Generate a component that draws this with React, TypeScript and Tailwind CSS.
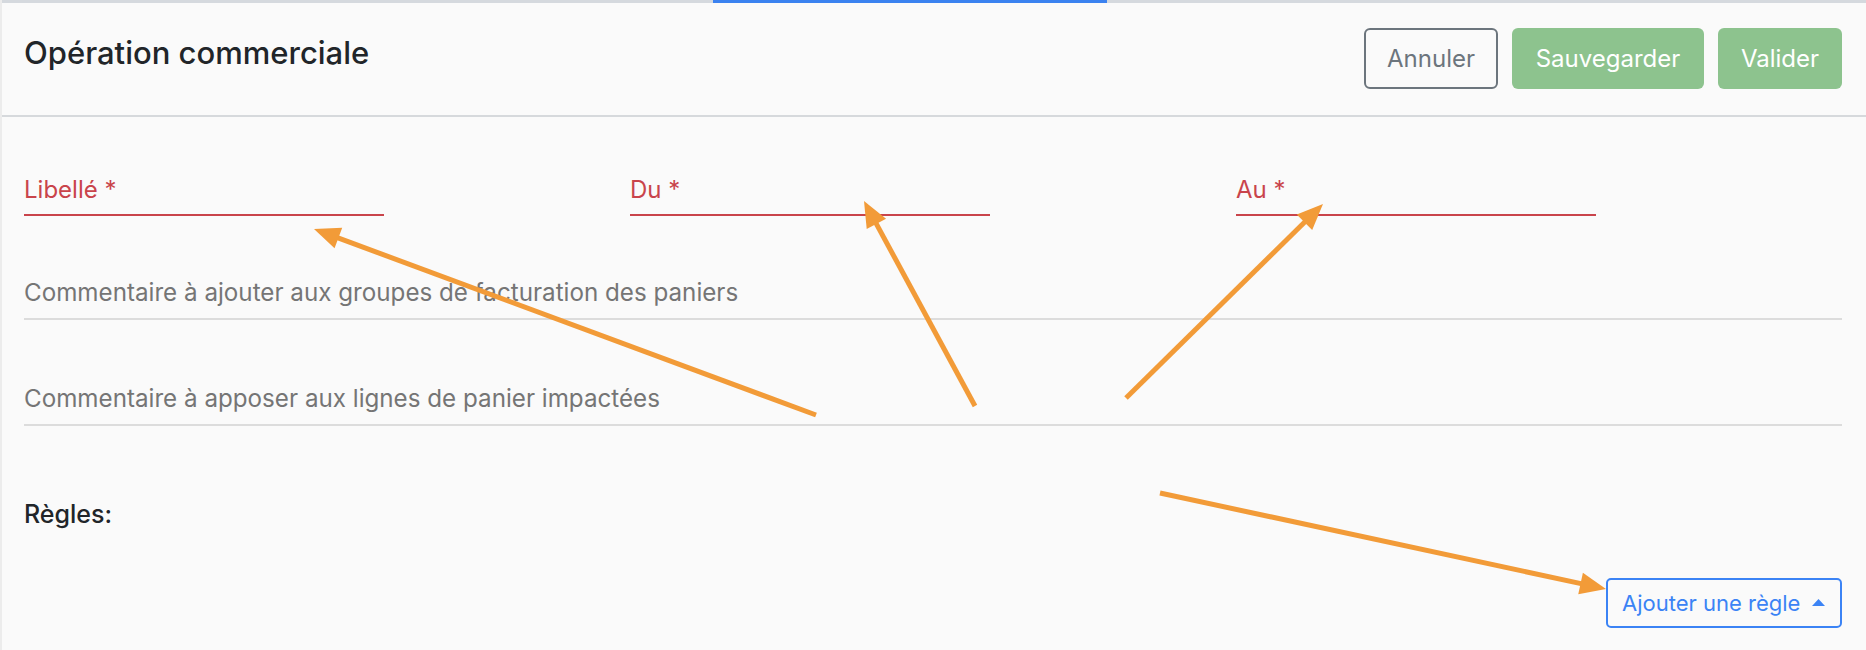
import React from "react";

type Arrow = { x1: number; y1: number; x2: number; y2: number };

const arrows: Arrow[] = [
  { x1: 814, y1: 415, x2: 312, y2: 229 },
  { x1: 973, y1: 406, x2: 862, y2: 201 },
  { x1: 1124, y1: 398, x2: 1321, y2: 204 },
  { x1: 1158, y1: 493, x2: 1604, y2: 589 },
];

function ArrowShape({ a }: { a: Arrow }) {
  const dx = a.x2 - a.x1;
  const dy = a.y2 - a.y1;
  const len = Math.hypot(dx, dy);
  const ux = dx / len;
  const uy = dy / len;
  const headLen = 26;
  const headW = 11;
  const bx = a.x2 - ux * headLen;
  const by = a.y2 - uy * headLen;
  const px = -uy;
  const py = ux;
  const pts = `${a.x2},${a.y2} ${bx + px * headW},${by + py * headW} ${bx - px * headW},${by - py * headW}`;
  return (
    <g>
      <line x1={a.x1} y1={a.y1} x2={bx + ux * 4} y2={by + uy * 4} stroke="#f29b38" strokeWidth={5} />
      <polygon points={pts} fill="#f29b38" />
    </g>
  );
}

function RequiredField({ label }: { label: string }) {
  return (
    <div className="w-[360px] border-b-2 border-[#c9444b] pb-[10px]">
      <span className="text-[24px] leading-[28px] text-[#c9444b]">{label}</span>
    </div>
  );
}

export default function App() {
  return (
    <div
      className="relative min-h-[650px] w-full bg-[#fafafa] border-l-2 border-[#ececec] overflow-hidden"
      style={{ fontFamily: "Inter, 'Liberation Sans', sans-serif" }}
    >
      <div className="h-[3px] w-full bg-[#d5d9de] flex">
        <div className="ml-[711px] w-[394px] h-[3px] bg-[#3b82f0]" />
      </div>

      <div className="flex items-start justify-between pl-[22px] pr-[24px] pt-[25px] h-[114px] border-b-2 border-[#d6d9dc]">
        <h1 className="mt-[7px] text-[31px] leading-[36px] font-medium text-[#212529]">Opération commerciale</h1>
        <div className="flex gap-[14px]">
          <button className="h-[61px] w-[134px] rounded-[6px] border-2 border-[#6c757d] text-[24px] text-[#6c757d]">
            Annuler
          </button>
          <button className="h-[61px] w-[192px] rounded-[6px] bg-[#8dc38e] text-[24px] text-white">
            Sauvegarder
          </button>
          <button className="h-[61px] w-[124px] rounded-[6px] bg-[#8dc38e] text-[24px] text-white">
            Valider
          </button>
        </div>
      </div>

      <div className="pl-[22px] pr-[24px]">
        <div className="grid grid-cols-3 pt-[59px]">
          <RequiredField label="Libellé *" />
          <RequiredField label="Du *" />
          <RequiredField label="Au *" />
        </div>

        <div className="mt-[62px] border-b-2 border-[#dcdcdc] pb-[11px]">
          <span className="text-[24.2px] leading-[29px] text-[#757575]">
            Commentaire à ajouter aux groupes de facturation des paniers
          </span>
        </div>

        <div className="mt-[64px] border-b-2 border-[#dcdcdc] pb-[11px]">
          <span className="text-[24.2px] leading-[29px] text-[#757575]">
            Commentaire à apposer aux lignes de panier impactées
          </span>
        </div>

        <div className="mt-[73px] text-[25px] leading-[30px] font-medium text-[#212529]">Règles:</div>

        <div className="flex justify-end mt-[49px]">
          <button className="h-[50px] w-[236px] rounded-[5px] border-2 border-[#3b83f5] text-[22px] text-[#3b83f5] flex items-center pl-[14px] gap-[12px]">
            <span>Ajouter une règle</span>
            <svg width="13" height="8" viewBox="0 0 13 8">
              <polygon points="6.5,0 13,7 0,7" fill="#3b83f5" />
            </svg>
          </button>
        </div>
      </div>

      <svg className="absolute inset-0 pointer-events-none" width="1866" height="650">
        {arrows.map((a, i) => (
          <ArrowShape key={i} a={a} />
        ))}
      </svg>
    </div>
  );
}
